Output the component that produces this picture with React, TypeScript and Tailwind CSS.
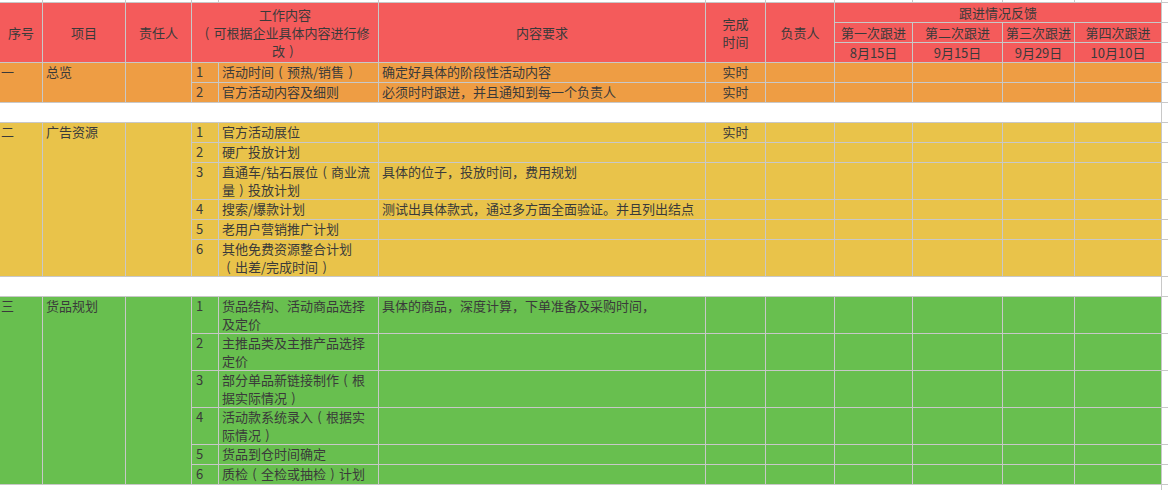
import { Fragment, ReactNode } from 'react';

type Row = {
  n: string;
  item: ReactNode;
  req?: string;
  time?: string;
};

const base = 'text-[13px] leading-[18px] text-[#3a3a3a]';

// full-width bracket drawn centred in its em box, like the original sheet font
function L() {
  return <span className="inline-block w-[13px] text-center">(</span>;
}
function R() {
  return <span className="inline-block w-[13px] text-center">)</span>;
}

function Blank({ className = 'bg-white' }: { className?: string }) {
  return <div className={className} />;
}

function Section({
  no,
  name,
  rows,
  bg,
}: {
  no: string;
  name: string;
  rows: Row[];
  bg: string;
}) {
  const span = rows.length === 2 ? 'row-span-2' : 'row-span-6';
  return (
    <>
      {rows.map((r, i) => (
        <Fragment key={r.n}>
          {i === 0 && (
            <>
              <div className={`${bg} ${span} ${base} pl-px`}>{no}</div>
              <div className={`${bg} ${span} ${base} pl-[3px]`}>{name}</div>
              <div className={`${bg} ${span}`} />
            </>
          )}
          <div className={`${bg} ${base} pl-[4px]`}>{r.n}</div>
          <div className={`${bg} ${base} pl-[3px] whitespace-nowrap`}>{r.item}</div>
          <div className={`${bg} ${base} pl-[3px] whitespace-nowrap`}>{r.req}</div>
          <div className={`${bg} ${base} text-center`}>{r.time}</div>
          <Blank className={bg} />
          <Blank className={bg} />
          <Blank className={bg} />
          <Blank className={bg} />
          <Blank className={bg} />
          <Blank />
        </Fragment>
      ))}
    </>
  );
}

export default function App() {
  const head = `bg-[#f45b5b] ${base}`;
  const center = 'flex items-center justify-center text-center';

  return (
    <div className="w-[1168px] h-[490px] overflow-hidden bg-white font-['Noto_Sans_CJK_SC',sans-serif]">
      <div className="grid gap-px bg-[#c8c8c8] grid-cols-[42px_82px_65px_26px_159px_326px_59px_68px_77px_89px_71px_86px_6px] grid-rows-[2px_19px_19px_19px_19px_19px_19px_19px_19px_36px_19px_19px_36px_19px_36px_36px_36px_36px_19px_19px_10px]">
        {/* top strip */}
        {Array.from({ length: 13 }).map((_, i) => (
          <Blank key={i} />
        ))}

        {/* Header */}
        <div className={`${head} ${center} row-span-3`}>序号</div>
        <div className={`${head} ${center} row-span-3`}>项目</div>
        <div className={`${head} ${center} row-span-3`}>责任人</div>
        <div className={`${head} ${center} row-span-3 col-span-2 flex-col`}>
          <span>工作内容</span>
          <span>
            <L />
            可根据企业具体内容进行修
          </span>
          <span>
            改<R />
          </span>
        </div>
        <div className={`${head} ${center} row-span-3`}>内容要求</div>
        <div className={`${head} ${center} row-span-3 pt-px`}>
          完成
          <br />
          时间
        </div>
        <div className={`${head} ${center} row-span-3`}>负责人</div>
        <div className={`${head} ${center} col-span-4`}>跟进情况反馈</div>
        <Blank />
        <div className={`${head} ${center}`}>第一次跟进</div>
        <div className={`${head} ${center}`}>第二次跟进</div>
        <div className={`${head} ${center} whitespace-nowrap`}>第三次跟进</div>
        <div className={`${head} ${center}`}>第四次跟进</div>
        <Blank />
        <div className={`${head} ${center}`}>8月15日</div>
        <div className={`${head} ${center}`}>9月15日</div>
        <div className={`${head} ${center}`}>9月29日</div>
        <div className={`${head} ${center}`}>10月10日</div>
        <Blank />

        {/* 一 总览 */}
        <Section
          no="一"
          name="总览"
          bg="bg-[#ee9d44]"
          rows={[
            {
              n: '1',
              item: (
                <>
                  活动时间<L />预热/销售<R />
                </>
              ),
              req: '确定好具体的阶段性活动内容',
              time: '实时',
            },
            { n: '2', item: '官方活动内容及细则', req: '必须时时跟进，并且通知到每一个负责人', time: '实时' },
          ]}
        />
        <div className="bg-white col-span-12" />
        <Blank />

        {/* 二 广告资源 */}
        <Section
          no="二"
          name="广告资源"
          bg="bg-[#e9c34a]"
          rows={[
            { n: '1', item: '官方活动展位', time: '实时' },
            { n: '2', item: '硬广投放计划' },
            {
              n: '3',
              item: (
                <>
                  直通车/钻石展位<L />商业流
                  <br />
                  量<R />投放计划
                </>
              ),
              req: '具体的位子，投放时间，费用规划',
            },
            { n: '4', item: '搜索/爆款计划', req: '测试出具体款式，通过多方面全面验证。并且列出结点' },
            { n: '5', item: '老用户营销推广计划' },
            {
              n: '6',
              item: (
                <>
                  其他免费资源整合计划
                  <br />
                  <L />出差/完成时间<R />
                </>
              ),
            },
          ]}
        />
        <div className="bg-white col-span-12" />
        <Blank />

        {/* 三 货品规划 */}
        <Section
          no="三"
          name="货品规划"
          bg="bg-[#68bf4f]"
          rows={[
            {
              n: '1',
              item: (
                <>
                  货品结构、活动商品选择
                  <br />
                  及定价
                </>
              ),
              req: '具体的商品，深度计算，下单准备及采购时间，',
            },
            {
              n: '2',
              item: (
                <>
                  主推品类及主推产品选择
                  <br />
                  定价
                </>
              ),
            },
            {
              n: '3',
              item: (
                <>
                  部分单品新链接制作<L />根
                  <br />
                  据实际情况<R />
                </>
              ),
            },
            {
              n: '4',
              item: (
                <>
                  活动款系统录入<L />根据实
                  <br />
                  际情况<R />
                </>
              ),
            },
            { n: '5', item: '货品到仓时间确定' },
            {
              n: '6',
              item: (
                <>
                  质检<L />全检或抽检<R />计划
                </>
              ),
            },
          ]}
        />
        <div className="bg-white col-span-12" />
        <Blank />
      </div>
    </div>
  );
}
